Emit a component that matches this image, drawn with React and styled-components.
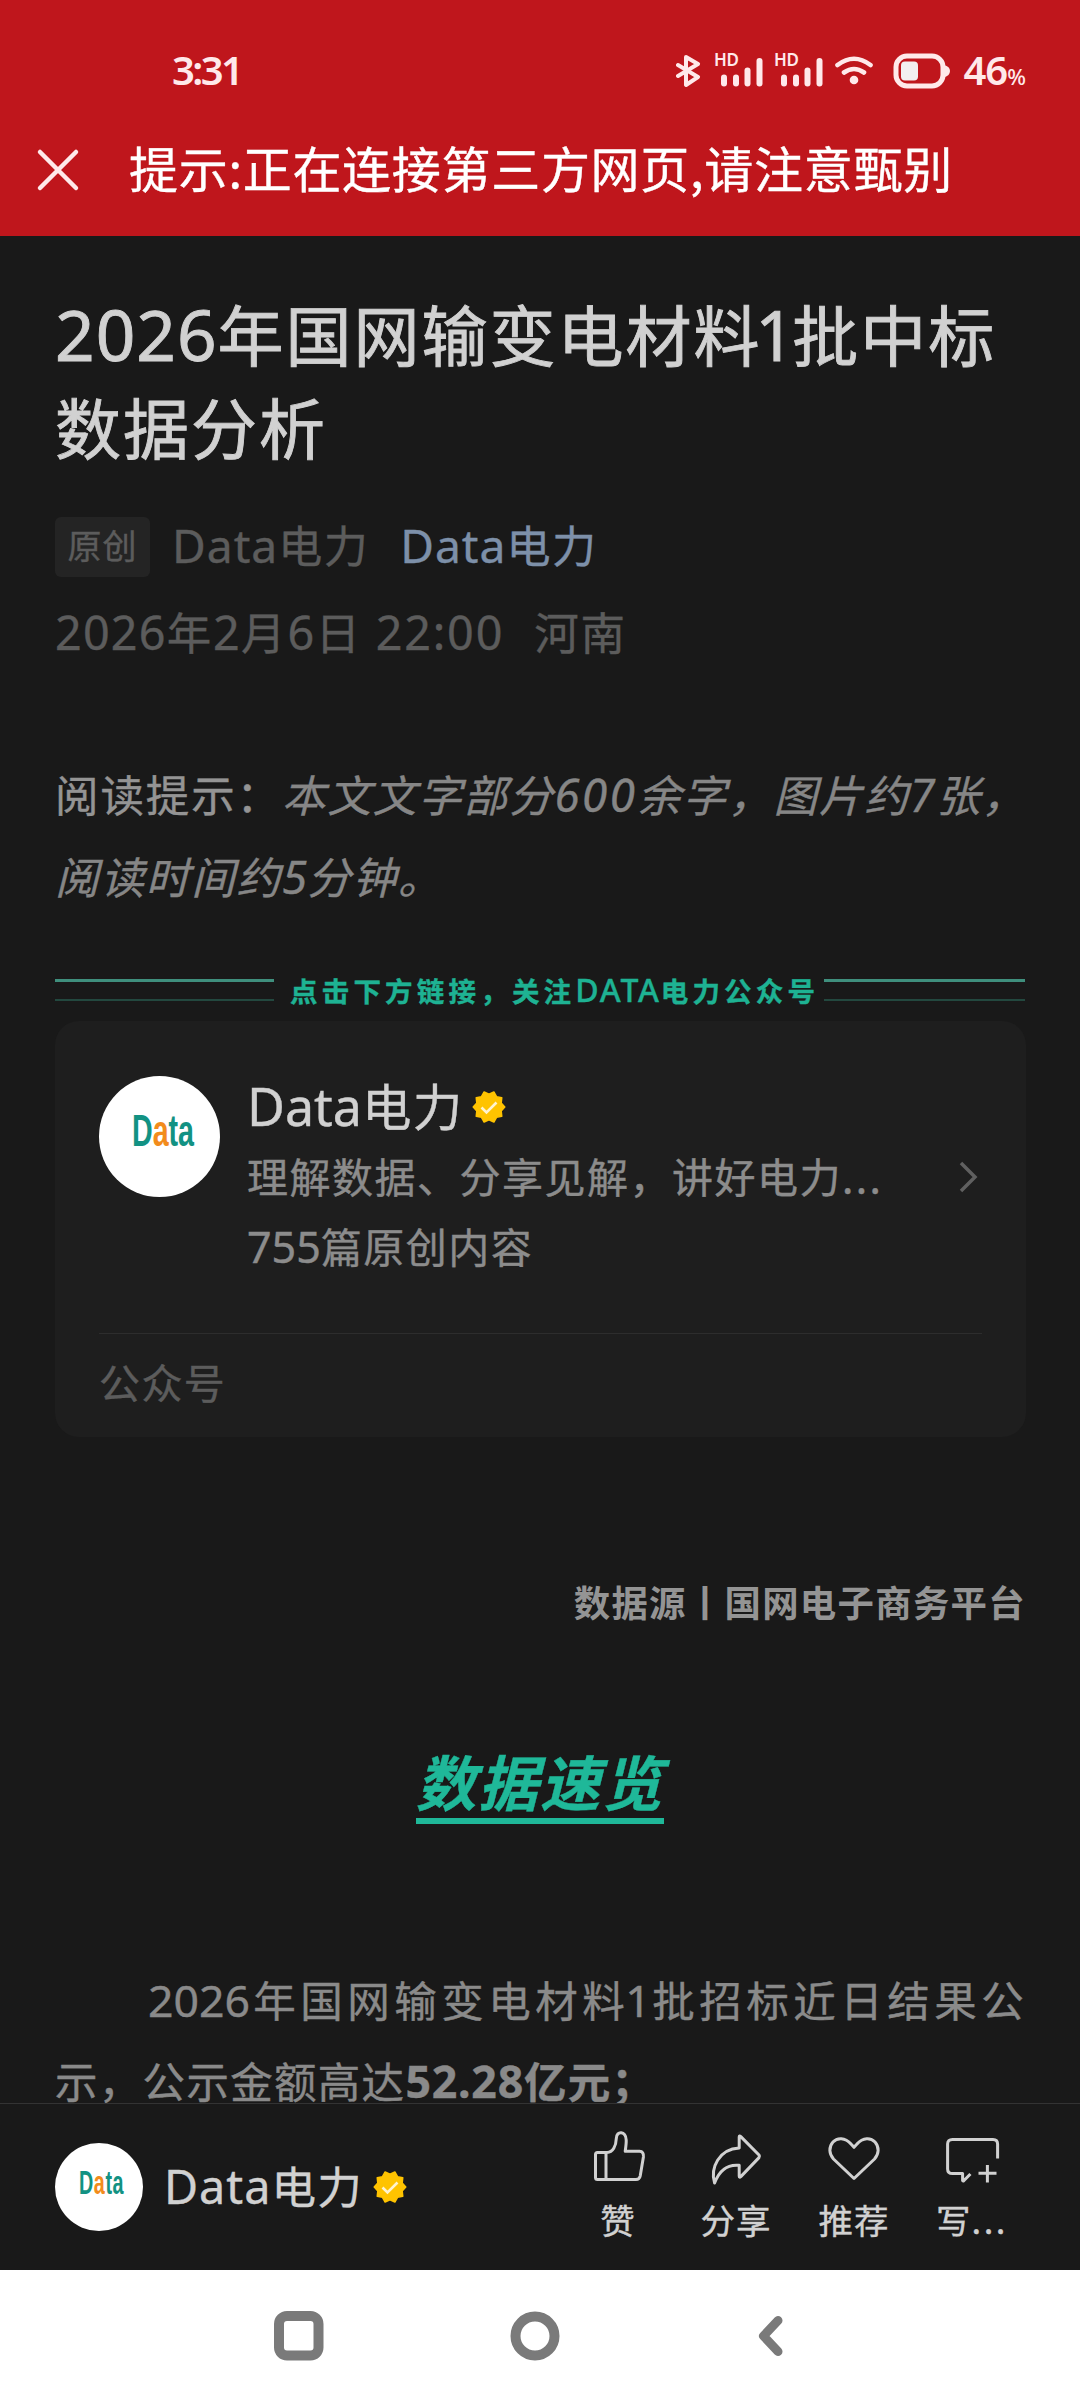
import React from "react";
import styled, { createGlobalStyle } from "styled-components";

const GlobalStyle = createGlobalStyle`
  body {
    margin: 0;
    background-color: #191919;
    font-family: "Noto Sans CJK SC", sans-serif;
    text-spacing-trim: space-all;
    -webkit-text-stroke-width: 0.4px;
  }
`;
const Page = styled.div`
  display: flex;
  flex-direction: column;
  width: 1080px;
  height: 2400px;
  overflow: hidden;
  background-color: #191919;
`;
const Latin = styled.span`
  font-family: "Noto Sans", "Noto Sans CJK SC", sans-serif;
  font-size: 1.05em;
  line-height: 1;
  letter-spacing: ${p => p.$gap || 0}px;
`;
// the digit one is set tighter than the others
const NarrowOne = styled(Latin)`
  margin: 0 -0.04em 0 -0.09em;
`;

/* header */
const Header = styled.header`
  height: 236px;
  background-color: #bf161c;
  color: #fff;
`;
const StatusBar = styled.div`
  display: flex;
  align-items: center;
  justify-content: space-between;
  height: 139px;
  padding: 0 55px 0 172px;
  color: #ffe9ea;
`;
const Clock = styled.span`
  font-family: "Noto Sans", sans-serif;
  font-size: 40px;
  font-weight: 600;
  line-height: 40px;
  letter-spacing: -2.6px;
  -webkit-text-stroke-width: 0;
`;
const StatusIcons = styled.div`
  display: flex;
  align-items: center;
`;
const Battery = styled.span`
  font-family: "Noto Sans", sans-serif;
  font-size: 40px;
  font-weight: 600;
  line-height: 40px;
  letter-spacing: -1px;
  margin: 6px 0 0 13px;
  -webkit-text-stroke-width: 0;
  small {
    font-size: 22px;
    font-weight: 500;
  }
`;
const BatteryIcon = styled.svg`
  margin: 2px 0 0 8px;
`;
const Notice = styled.div`
  display: flex;
  align-items: center;
  height: 62px;
  padding-left: 36px;
  font-size: 49px;
  line-height: 52px;
  letter-spacing: 0.7px;
  white-space: nowrap;
  svg {
    margin-right: 49px;
  }
  span {
    margin-top: -7px;
  }
`;

/* article */
const Article = styled.main`
  flex: 1;
  min-height: 0;
  overflow: hidden;
  padding: 50px 55px 0;
`;
const Title = styled.h1`
  margin: 0;
  font-size: 66px;
  font-weight: 400;
  line-height: 93.3px;
  letter-spacing: 2px;
  white-space: nowrap;
  color: #d1d1d1;
  -webkit-text-stroke-width: 0.9px;
`;
const Meta = styled.div`
  display: flex;
  height: 60px;
  margin-top: 44px;
  font-size: 44px;
  line-height: 54px;
  letter-spacing: 1.5px;
  color: #5c5c5c;
`;
const OriginalTag = styled.span`
  width: 95px;
  margin-right: 22px;
  border-radius: 6px;
  background-color: #242424;
  font-size: 34px;
  line-height: 55px;
  letter-spacing: 1px;
  text-align: center;
`;
const Author = styled.span`
  margin-right: 31px;
`;
const AccountLink = styled.span`
  color: #7d90a9;
`;
const PublishInfo = styled.div`
  display: flex;
  margin-top: 24px;
  font-size: 44.5px;
  line-height: 60px;
  letter-spacing: 1.9px;
  white-space: pre;
  color: #5c5c5c;
`;
const Place = styled.span`
  margin-left: 30px;
`;
const ReadingHint = styled.p`
  margin: 92px 0 0;
  font-size: 43.5px;
  line-height: 82.6px;
  letter-spacing: 1.9px;
  white-space: nowrap;
  color: #949494;
  em {
    color: #868686;
  }
`;
const FollowBanner = styled.div`
  display: flex;
  align-items: center;
  height: 30px;
  margin-top: 57px;
`;
const DoubleRule = styled.i`
  width: ${p => p.$width}px;
  height: 17px;
  border-top: 3px solid #3f8f7d;
  border-bottom: 2px solid #23483f;
`;
const BannerText = styled.span`
  flex: 1;
  font-size: 27.5px;
  font-weight: 700;
  line-height: 28px;
  letter-spacing: 4.2px;
  padding-left: 16px;
  white-space: nowrap;
  color: #1eb293;
  ${Latin} {
    font-size: 32px;
    font-weight: 500;
  }
`;
const ProfileCard = styled.section`
  box-sizing: border-box;
  width: 971px;
  height: 416px;
  margin-top: 16px;
  padding: 55px 44px 0;
  border-radius: 24px;
  background-color: #1e1e1e;
`;
const Profile = styled.div`
  display: flex;
  height: 257px;
  border-bottom: 1px solid #2d2d2d;
`;
const ProfileText = styled.div`
  flex: 1;
  margin-left: 27px;
  white-space: nowrap;
`;
const ProfileName = styled.div`
  display: flex;
  align-items: center;
  font-size: 49.5px;
  line-height: 60px;
  letter-spacing: 1.2px;
  margin-top: -1px;
  color: #d1d1d1;
  svg {
    margin: 4px 0 0 9px;
  }
`;
const ProfileLine = styled.div`
  font-size: 41px;
  line-height: 70px;
  letter-spacing: 1.5px;
  color: #8c8c8c;
  &:nth-child(2) {
    margin-top: 5px;
  }
`;
const Dots = styled.span`
  letter-spacing: ${p => p.$gap}px;
`;
const Arrow = styled.svg`
  margin: 83px 2px 0 0;
`;
const CardFooter = styled.div`
  font-size: 41px;
  line-height: 95px;
  letter-spacing: 1.4px;
  color: #5c5c5c;
`;
const Source = styled.p`
  margin: 135px -1px 0 0;
  font-size: 36.4px;
  font-weight: 700;
  line-height: 58px;
  letter-spacing: 1.3px;
  text-align: right;
  color: #949494;
  -webkit-text-stroke-width: 0;
`;
const SectionHeading = styled.h2`
  width: fit-content;
  margin: 114px auto 0;
  padding-bottom: 2px;
  border-bottom: 6px solid #1fb899;
  font-size: 60px;
  font-style: italic;
  font-weight: 700;
  line-height: 72px;
  letter-spacing: 2px;
  color: #1fb899;
`;
const Paragraph = styled.p`
  margin: 134px 0 0;
  font-size: 42.5px;
  line-height: 81.6px;
  letter-spacing: 1.3px;
  text-align: justify;
  text-indent: 93px;
  color: #8a8a8a;
`;

/* bottom bars */
const ActionBar = styled.footer`
  box-sizing: border-box;
  display: flex;
  height: 167px;
  padding-left: 55px;
  border-top: 1px solid #333;
  svg {
    flex: none;
  }
`;
const Account = styled.div`
  display: flex;
  align-items: center;
  width: 504px;
  font-size: 44.5px;
  line-height: 60px;
  letter-spacing: 1.3px;
  color: #d1d1d1;
`;
const AccountName = styled.span`
  margin: -4px 10px 0 21px;
`;
const Action = styled.div`
  display: flex;
  flex-direction: column;
  align-items: center;
  width: 118px;
  padding-top: 26px;
  font-size: 34.5px;
  line-height: 66px;
  letter-spacing: 1px;
  white-space: nowrap;
  color: #d1d1d1;
`;
const NavBar = styled.nav`
  display: flex;
  justify-content: center;
  gap: 186px;
  height: 130px;
  padding-top: 41px;
  padding-right: 10px;
  box-sizing: border-box;
  background-color: #fff;
`;

function Avatar({ size }) {
  return (
    <svg width={size} height={size} viewBox="0 0 121 121">
      <circle cx="60.5" cy="60.5" r="60.5" fill="#fff" />
      <text
        x="33"
        y="70"
        fontFamily="Liberation Sans, sans-serif"
        fontSize="45"
        fontWeight="700"
        textLength="62"
        lengthAdjust="spacingAndGlyphs"
        fill="#129283"
      >
        D<tspan fill="#f28c1c">a</tspan>ta
      </text>
    </svg>
  );
}

// ten-pointed seal with a tick
const sealPoints = Array.from({ length: 20 }, (_, i) => {
  const r = i % 2 ? 12.8 : 15.8;
  const a = ((i * 18 - 72) * Math.PI) / 180;
  return `${(17 + r * Math.cos(a)).toFixed(2)},${(17 + r * Math.sin(a)).toFixed(2)}`;
}).join(" ");

function Verified() {
  return (
    <svg width="34" height="34" viewBox="0 0 34 34">
      <polygon
        points={sealPoints}
        fill="#ffc300"
        stroke="#ffc300"
        strokeWidth="1.5"
        strokeLinejoin="round"
      />
      <path d="M9.5 17.5L14.5 22.5L24.5 12.5" fill="none" stroke="#fff3d0" strokeWidth="2.6" />
    </svg>
  );
}

function Signal() {
  return (
    <svg width="60" height="48" viewBox="0 -6 60 48" fill="currentColor">
      <text x="0" y="14" fontFamily="Noto Sans" fontSize="17" fontWeight="600" textLength="25">
        HD
      </text>
      <rect x="7" y="22.5" width="6" height="12" rx="3" />
      <rect x="19" y="22.5" width="6" height="12" rx="3" />
      <rect x="30.5" y="15.5" width="6" height="19" rx="3" />
      <rect x="42.5" y="6" width="6" height="28.5" rx="3" />
    </svg>
  );
}

const actions = [
  {
    label: "赞",
    d: "M7.5 22.5Q5.5 22.5 5.5 24.5V47.5Q5.5 49.5 7.5 49.5H46Q49.5 49.5 50.2 46L53.4 27Q54 21.5 49.5 21.3H35.2Q36.4 13 36.2 10C36 1 26.5 0 26.3 8.5C26 16 23 22.5 17 22.5ZM16 23V49"
  },
  {
    label: "分享",
    d: "M31.2 18V7Q31.2 5 32.8 6.6L51 25Q52 26.3 51 27.6L32.8 46.6Q31.2 48 31.2 46V35.3C18 34 11 41 6.6 53C2 38 11 19 31.2 18Z"
  },
  {
    label: "推荐",
    d: "M28 17.3L25 14C19 7 11 7.5 7 12C2.5 17 3 24 7.5 29L28 48.5L48.5 29C53 24 53.5 17 49 12C45 7.5 37 7 31 14Z"
  },
  {
    label: "写",
    more: true,
    d: "M53.6 28.5V14Q53.6 9.5 49 9.5H8.5Q3.6 9.5 3.6 14V39Q3.6 43.6 8.5 43.6H18.6V50.5Q18.8 51.5 20 50.5L26.4 44M34.5 43.3H52.5M43.4 35V52.5"
  }
];

export default function App() {
  return (
    <Page>
      <GlobalStyle />
      <Header>
        <StatusBar>
          <Clock>3:31</Clock>
          <StatusIcons>
            <svg width="38" height="36" viewBox="0 0 38 36" fill="none" stroke="currentColor" strokeWidth="4" strokeLinejoin="round" strokeLinecap="round">
              <path d="M2 13L22 25L10 33V5L22 12L2 24" />
            </svg>
            <Signal />
            <Signal />
            <svg width="51" height="36" viewBox="10 0 51 36" fill="none" stroke="currentColor" strokeWidth="4.6" strokeLinecap="round">
              <path d="M13.5 13Q30 0.5 46.5 13M20 20.5Q30 13.5 40 20.5" />
              <circle cx="30" cy="28" r="4.3" fill="currentColor" stroke="none" />
            </svg>
            <BatteryIcon width="57" height="36" viewBox="0 0 57 36" fill="none">
              <rect x="3" y="3" width="47" height="30" rx="11" stroke="currentColor" strokeWidth="5" />
              <rect x="8" y="8.5" width="17" height="19" rx="4" fill="#f3f0f0" />
              <path d="M51 12Q57 13.5 57 18T51 24.5Z" fill="currentColor" />
            </BatteryIcon>
            <Battery>
              46<small>%</small>
            </Battery>
          </StatusIcons>
        </StatusBar>
        <Notice>
          <svg width="44" height="44" viewBox="0 0 44 44" stroke="#ffe9ea" strokeWidth="4.5" strokeLinecap="round">
            <path d="M4 4L40 40M40 4L4 40" />
          </svg>
          <span>提示:正在连接第三方网页,请注意甄别</span>
        </Notice>
      </Header>

      <Article>
        <Title>
          <Latin $gap={1}>2026</Latin>年国网输变电材料<NarrowOne>1</NarrowOne>批中标
          <br />
          数据分析
        </Title>
        <Meta>
          <OriginalTag>原创</OriginalTag>
          <Author>
            <Latin $gap={1}>Data</Latin>电力
          </Author>
          <AccountLink>
            <Latin $gap={1}>Data</Latin>电力
          </AccountLink>
        </Meta>
        <PublishInfo>
          <span>
            <Latin $gap={1.2}>2026</Latin>年<Latin $gap={1.2}>2</Latin>月
            <Latin $gap={1.2}>6</Latin>日<Latin $gap={1.8}> 22:00</Latin>
          </span>
          <Place>河南</Place>
        </PublishInfo>
        <ReadingHint>
          阅读提示：
          <em>
            本文文字部分<Latin $gap={2.5}>600</Latin>余字，图片约<Latin $gap={1.5}>7</Latin>张，
            <br />
            阅读时间约<Latin>5</Latin>分钟。
          </em>
        </ReadingHint>

        <FollowBanner>
          <DoubleRule $width={219} />
          <BannerText>
            点击下方链接，关注<Latin $gap={1.8}>DATA</Latin>电力公众号
          </BannerText>
          <DoubleRule $width={201} />
        </FollowBanner>

        <ProfileCard>
          <Profile>
            <Avatar size={121} />
            <ProfileText>
              <ProfileName>
                <span>
                  <Latin>Data</Latin>电力
                </span>
                <Verified />
              </ProfileName>
              <ProfileLine>
                理解数据、分享见解，讲好电力<Dots $gap={2.3}>...</Dots>
              </ProfileLine>
              <ProfileLine>
                <Latin>755</Latin>篇原创内容
              </ProfileLine>
            </ProfileText>
            <Arrow width="22" height="36" viewBox="0 0 22 36" fill="none" stroke="#606060" strokeWidth="3.5">
              <path d="M3 4L17 18L3 32" />
            </Arrow>
          </Profile>
          <CardFooter>公众号</CardFooter>
        </ProfileCard>

        <Source>数据源丨国网电子商务平台</Source>
        <SectionHeading>数据速览</SectionHeading>
        <Paragraph>
          <Latin>2026</Latin>年国网输变电材料<NarrowOne>1</NarrowOne>批招标近日结果公示，公示金额高达
          <b>
            <Latin $gap={0.8}>52.28</Latin>亿元；
          </b>
        </Paragraph>
      </Article>

      <ActionBar>
        <Account>
          <Avatar size={88} />
          <AccountName>
            <Latin $gap={1}>Data</Latin>电力
          </AccountName>
          <Verified />
        </Account>
        {actions.map(a => (
          <Action key={a.label}>
            <svg width="56" height="56" viewBox="0 0 56 56" fill="none" stroke="currentColor" strokeWidth="3" strokeLinejoin="round">
              <path d={a.d} />
            </svg>
            <span>
              {a.label}
              {a.more && <Dots $gap={2.5}>...</Dots>}
            </span>
          </Action>
        ))}
      </ActionBar>
      <NavBar>
        <svg width="50" height="50" fill="none" stroke="#7a7a7a" strokeWidth="10">
          <rect x="5" y="5" width="39.5" height="39.5" rx="8" />
        </svg>
        <svg width="50" height="50" fill="none" stroke="#7a7a7a" strokeWidth="10">
          <circle cx="25" cy="25" r="19.5" />
        </svg>
        <svg width="50" height="50" fill="none" stroke="#7a7a7a" strokeWidth="9" strokeLinecap="round" strokeLinejoin="round">
          <path d="M32 9.5L17.5 25L32 40.5" />
        </svg>
      </NavBar>
    </Page>
  );
}
